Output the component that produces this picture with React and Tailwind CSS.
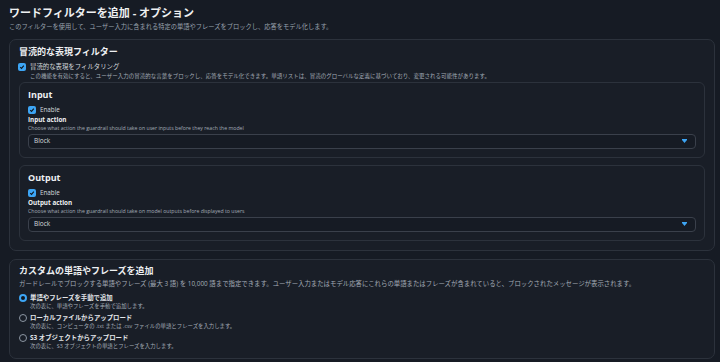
import React from 'react'

const font = "font-['Open_Sans','Noto_Sans_CJK_JP',sans-serif]"

const Check = () => (
  <span className="w-[8px] h-[8px] rounded-[2px] bg-[#3da5f4] flex items-center justify-center shrink-0">
    <svg width="6" height="6" viewBox="0 0 10 10">
      <path d="M2 5.2 L4.2 7.4 L8 2.6" stroke="#0f141a" strokeWidth="1.8" fill="none" />
    </svg>
  </span>
)

const Radio = ({ on }) =>
  on ? (
    <span className="block w-[8px] h-[8px] rounded-full border-[2.5px] border-[#3da5f4] bg-[#0f141a] shrink-0" />
  ) : (
    <span className="block w-[8px] h-[8px] rounded-full border border-[#8c96a3] shrink-0" />
  )

const Select = () => (
  <div className="h-[15px] rounded-[4px] border border-[#3a404b] bg-[#161b24] flex items-center justify-between pl-[5px] pr-[8px]">
    <span className="text-[6.5px] text-[#d5d9de]">Block</span>
    <svg width="5" height="4" viewBox="0 0 5 4" className="block">
      <path d="M0 0 H5 V1 L2.5 4 L0 1 Z" fill="#3da5f4" />
    </svg>
  </div>
)

const Guard = ({ title, action, desc }) => (
  <div className="rounded-[6px] border border-[#2c323c] bg-[#191e27] px-[8px] pt-[5px] pb-[8px]">
    <div className="text-[9px] leading-[14px] font-bold text-[#eef0f2]">{title}</div>
    <div className="flex items-center gap-[4px] mt-[4px] h-[9px]">
      <Check />
      <span className="text-[6.3px] text-[#d5d9de]">Enable</span>
    </div>
    <div className="text-[6.3px] leading-[9px] font-bold text-[#eef0f2]">{action}</div>
    <div className="text-[5.2px] leading-[8px] text-[#a3abb6]">{desc}</div>
    <div className="mt-[2px]">
      <Select />
    </div>
  </div>
)

const RadioItem = ({ on, label, sub }) => (
  <div className="flex gap-[3px]">
    <div className="pt-[0.5px]">
      <Radio on={on} />
    </div>
    <div>
      <div className="text-[6.4px] leading-[9px] font-bold text-[#e3e6ea]">{label}</div>
      <div className="text-[5.4px] leading-[8px] text-[#a3abb6]">{sub}</div>
    </div>
  </div>
)

export default function App() {
  return (
    <div className={`${font} w-[720px] h-[362px] bg-[#161b24] overflow-hidden pl-[9px] pr-[5px] pt-[5px]`}>
      <div className="text-[11px] leading-[15px] font-bold text-[#eef0f2]">ワードフィルターを追加 - オプション</div>
      <div className="text-[6.25px] leading-[9px] text-[#99a2ae] mt-[1.5px]">
        このフィルターを使用して、ユーザー入力に含まれる特定の単語やフレーズをブロックし、応答をモデル化します。
      </div>

      <div className="mt-[8px] rounded-[7px] border border-[#2c323c] bg-[#191e27] px-[9px] pt-[5px] pb-[9px]">
        <div className="text-[9px] leading-[14px] font-bold text-[#eef0f2]">冒涜的な表現フィルター</div>
        <div className="flex items-center gap-[4px] mt-[4px] h-[9px] ml-[-1px]">
          <Check />
          <span className="text-[6.4px] text-[#d5d9de]">冒涜的な表現をフィルタリング</span>
        </div>
        <div className="text-[5.5px] leading-[8px] text-[#a3abb6] pl-[11px]">
          この機能を有効にすると、ユーザー入力の冒涜的な言葉をブロックし、応答をモデル化できます。単語リストは、冒涜のグローバルな定義に基づいており、変更される可能性があります。
        </div>
        <div className="mt-[2px] flex flex-col gap-[7px]">
          <Guard
            title="Input"
            action="Input action"
            desc="Choose what action the guardrail should take on user inputs before they reach the model"
          />
          <Guard
            title="Output"
            action="Output action"
            desc="Choose what action the guardrail should take on model outputs before displayed to users"
          />
        </div>
      </div>

      <div className="mt-[8px] rounded-[7px] border border-[#2c323c] bg-[#191e27] px-[9px] pt-[4px] pb-[8px]">
        <div className="text-[9px] leading-[14px] font-bold text-[#eef0f2]">カスタムの単語やフレーズを追加</div>
        <div className="text-[6.4px] leading-[9px] text-[#a3abb6] mt-[1px]">
          ガードレールでブロックする単語やフレーズ (最大 3 語) を 10,000 語まで指定できます。ユーザー入力またはモデル応答にこれらの単語またはフレーズが含まれていると、ブロックされたメッセージが表示されます。
        </div>
        <div className="mt-[5.5px] flex flex-col gap-[3px]">
          <RadioItem on label="単語やフレーズを手動で追加" sub="次の表に、単語やフレーズを手動で追加します。" />
          <RadioItem label="ローカルファイルからアップロード" sub="次の表に、コンピュータの .txt または .csv ファイルの単語とフレーズを入力します。" />
          <RadioItem label="S3 オブジェクトからアップロード" sub="次の表に、S3 オブジェクトの単語とフレーズを入力します。" />
        </div>
      </div>
    </div>
  )
}
